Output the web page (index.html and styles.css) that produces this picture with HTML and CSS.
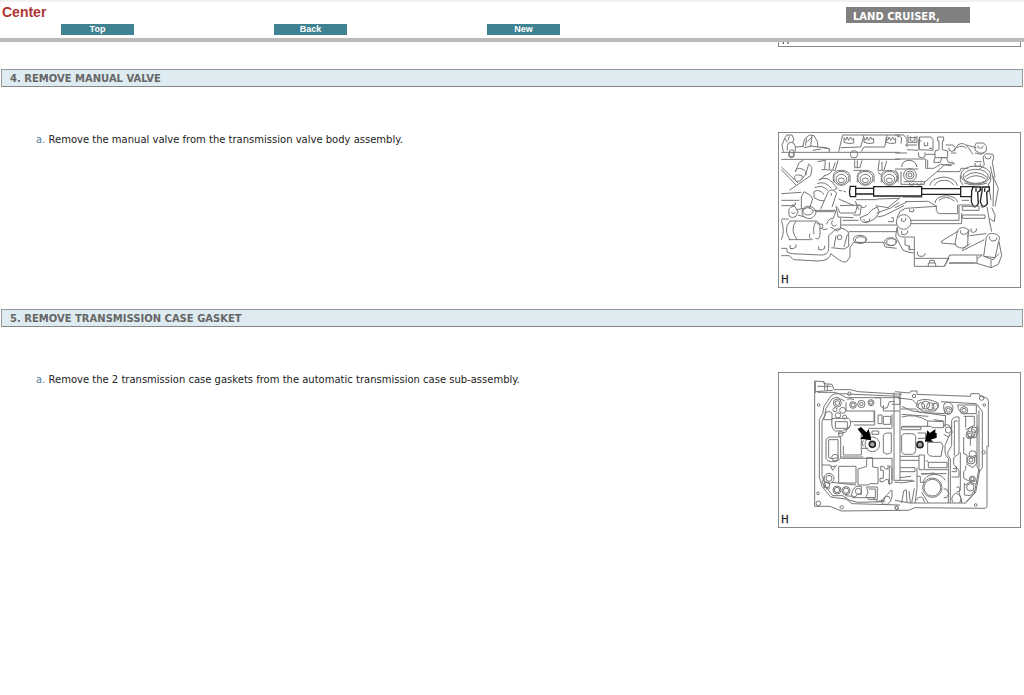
FILE: index.html
```html
<!DOCTYPE html>
<html lang="en">
<head>
<meta charset="utf-8">
<title>Center</title>
<link rel="stylesheet" href="styles.css">
</head>
<body>
<header class="topbar">
  <div class="brand">
    <h1 class="title">Center</h1>
    <nav class="nav"><a href="#top">Top</a><a href="#back">Back</a><a href="#new">New</a></nav>
  </div>
  <div class="model">LAND CRUISER,</div>
</header>
<main class="content">
  <div class="previous"><span>H</span></div>

  <section class="step">
    <h2 class="heading">4. REMOVE MANUAL VALVE</h2>
    <div class="row">
      <p class="text"><span class="letter">a.</span> Remove the manual valve from the transmission valve body assembly.</p>
      <figure class="figure">
        <svg viewBox="27 24 723 462" role="img" aria-label="Manual valve in the valve body">
          <g class="ink">
            <path d="M34 82H390M34 103H390M40 80L36 60 44 40 50 30H66L72 44 66 54M44 40l8 12M58 34l-4 12M52 76V62q2-10 12-10t12 12v16M58 82q0-8 7-8t7 8v12H58zM76 66l26-2M98 66L104 42 118 30 132 32 142 50 144 68M110 40l-4 22M126 32l-4 34M112 50l14-14M102 68q24-8 44-2l34 6-4 10M128 76l26-4M154 66l22 4M206 80L218 30H390M212 68l60-2 10-36M274 80l8-14h62l8-36M222 52V38l5 8 4-10 5 10 6-10 4 8 5-4v14q-14 4-29-2zM282 52V38l5 8 4-10 5 10 6-10 4 8 5-4v14q-14 4-29-2zM348 52V38l5 8 4-10 5 10 6-10 4 8 5-4v14q-14 4-29-2z"/>
            <circle cx="64" cy="90" r="8"/><circle cx="252" cy="88" r="11"/>
            <path d="M34 126L84 174M34 134L78 180M76 140L88 112 100 106M116 118L106 150 92 166M76 140q4-14 20-8t12 18M86 150q-14-2-12 10t14 8q12-4 8-16zM116 116L126 128 122 152 58 196M142 110L166 106 164 134H154M164 134l32 2 8-30M178 112v20M196 112l-8 22M160 154Q180 148 186 138M148 166L166 150M254 106v22h16l6-22M262 106v22M250 136h26M328 106l-4 30h18l8-28M336 110v24M324 140l8 10M190 172v-20q2-16 24-16t26 16v20M262 172v-20q2-16 24-16t26 16v20M334 172v-20q2-16 24-16t26 16v20"/>
            <ellipse cx="214" cy="160" rx="23" ry="21"/><ellipse cx="214" cy="163" rx="16" ry="15"/><ellipse cx="214" cy="166" rx="9" ry="7"/>
            <ellipse cx="286" cy="160" rx="23" ry="21"/><ellipse cx="286" cy="163" rx="16" ry="15"/><ellipse cx="286" cy="166" rx="9" ry="7"/>
            <ellipse cx="358" cy="160" rx="23" ry="21"/><ellipse cx="358" cy="163" rx="16" ry="15"/><ellipse cx="358" cy="166" rx="9" ry="7"/>
            <path d="M146 164Q174 152 190 176L202 190 190 196M142 176Q164 166 184 190M134 188Q156 178 174 196M132 200Q146 190 162 208M172 206q4-14 18-10l10 8-14 42M172 206l-20 46M132 200v18q14 10 32 10M184 204v8M34 206l60-4M34 226h54M34 242h40M94 252V216l8-16 18 10 8 12-10 30M66 240h10v-8M206 196l10 2M220 198l8 3M206 222l46 20M258 224h64M256 228l10 26M322 222l68-2M274 246q12 6 14-6M316 242l38 6 36-30"/>
          </g>
          <g class="ink" transform="translate(375 0)">
            <path d="M0 30H26L36 42V66M6 36q8-6 14 2l-2 18M38 30l2 22h26V32M46 34v12q6 6 14 0V34M40 38h24M30 60h36M36 74l34 2M74 36h34l6 8v32l-42-2zM74 36l-4 14 2 24M88 52v10h10V52M80 48h-6M102 70h10M70 82l2 14q10 6 18-2V82M92 88h28M128 36h18v12h-4v26l16 4v20H120V78l12-4V48h-4zM120 98l-4 14h20l4-14h14l6 14h16M152 60h20l8 6M162 68v8q8 6 18 0v-8M168 84h16M178 76l10-16Q206 48 220 68L234 88M186 68q16-10 28 2M214 60l30 8M240 62l4-8h22l8 10v14q-8 10-20 6l-14-8zM248 62q0 8 8 8t8-8M240 84l20 4 8-8M264 96l8-10 22 2 2 10-4 14 8 46M270 94q0 8 9 8t9-8M264 96l4 24-16 14M238 110h22M240 114v10h16v-8M294 154l16 36-10 54M286 124l10 44-2 76M280 176l8 50M0 84H36M0 102H92V130H116M0 132h70M98 104v24M20 126q2-20 22-20t24 20M180 116l-32 4-22 20-40 34M126 140h68l4-10h22M116 130l20-12 34 4"/>
            <circle cx="45" cy="150" r="19"/><circle cx="45" cy="150" r="12"/><circle cx="45" cy="150" r="6"/><path d="M0 136q8 4 10 16t-10 18"/>
            <ellipse cx="242" cy="150" rx="45" ry="27"/><ellipse cx="242" cy="154" rx="38" ry="21"/><path d="M208 156q34-28 70 2M214 162q30-20 58 0M208 174q34 12 68 0M196 152v16l8 12M287 152v16l-8 12M18 140v38H88V168M26 170H86M44 174v6h12v-6M66 174v6h12v-6M104 182q4-22 42-26 34 2 42 26M118 182q8-16 30-16 18 0 28 14M120 234q2-20 34-22 30 2 34 20M132 226q22-18 46 2M30 230l70-1 26 16M0 248l34-16M22 216l60 1M200 226h22M188 240h42"/>
          </g>
          <path class="shaft" d="M241 184h16v6h54v-5h144v6h117v-6h38v30h-38v-7H455v5H311v-6h-54v8h-16q-5-15 0-31zM257 190v18M311 186v24M455 188v25M572 190v20"/>
          <path class="shaft" d="M609 186h22v10l-8 6 2 34q-7 12-16 6l-5-12 1-32zM636 186h22v10l-8 6 2 34q-7 12-16 6l-5-12 5-32zM618 190v10M644 190v10"/>
          <g class="ink" transform="translate(0 240)">
            <path d="M34 42h22M34 46q12 32 0 58M60 48q-22 26 0 56M78 48q-20 28 4 56M60 48h80M56 104h66M138 50q14-2 12 28 2 30-14 22M138 50q-10 14-6 38M120 86q-6 14 8 18M140 56l18 2v12h-10M34 130h16l2 12 14 4 84 4q26 2 26-20V92l22-20h14M34 152h24l12 12 72 4q38 0 40-22l16 12Q222 176 230 170L240 156V128L250 112H340l6 14 34 4M60 120v10q10 4 18-4v-8M146 124v10q10 4 18-4v-8M56 16q2-12 18-12l10 16-6 14q-12 8-20 0zM64 22q4 8 12 0M96 18q4-16 22-14t20 20q-8 20-26 16t-16-22M78 14l28-4M130 16h66M84 30l20 6M138 20h56M210 2l60-2M204 10l6 14h46l6-22h12l-4 28h-20M158 74l14-2M170 58q4-18 20-18l12-34M188 46q-8 12 4 18l8-4M182 66l20 12 10-8v-32M218 46h48M212 68l18 8 6 8v40l-14 8-38-4M198 92l-6 34M232 88l-10 38M202 96q0-6 7-6t7 7-8 7-6-8M236 80h144M214 60H380M198 2l6 34 46 2M270 38l24-10 12-14 16-8 6 16-14 20-22 10q-18 4-22-14M282 42q-2 10 14 8l4-10M320 24l40-14 28-18M322 36l20-4 60-30M354 50h16V38h-6"/>
            <ellipse cx="270" cy="103" rx="20" ry="12"/><ellipse cx="272" cy="105" rx="16" ry="10"/><ellipse cx="362" cy="110" rx="18" ry="12"/><ellipse cx="364" cy="111" rx="14" ry="10"/><ellipse cx="114" cy="19" rx="15" ry="11"/>
          </g>
          <g class="ink" transform="translate(375 240)">
            <circle cx="26" cy="51" r="22"/><path d="M20 40v8q8 4 12-2v-8M6 38L16 18 32 10 124 4M44 12v8h12v-8M124 2v14q2 10 12 10h52V0M192 2v44H48M200 24v32H48M202 4h50v12H202zM202 30h68v10H202zM6 66l4 24 10 6h38v88h90l14-24H60M20 78v10q10 4 18-4v-8M6 68l-4 26L24 136l18 6 16 2M30 100v20l14 4v10h14M42 122v14M68 140q-4 14 10 14t12-10M100 184v-10h22v10M104 174v-8h14v8M190 78l-50 30v6l44 4M180 114l8-38q12-16 32-2l-2 46q-14 16-34 4zM196 76q-2 12 10 12t12-8M228 70v10q8 6 16-2v-8M222 74l-4 22M224 92l50-6M200 138l68-34M202 132l24-16M274 98q4-16 24-12t14 20l-12 52-34-4zM284 94q-2 14 10 14t12-10M312 110l8 42-10 26-22 10-46-14H162M148 184l16-34h98M162 174h80M246 152v22M266 154l28 10 18-18M288 164v22M262 150l-16 12M276 6l6 34 16 10 2-20-10-22M282 42l8 38M234 2q0 8 9 4M258 2q0 8 9 4"/>
          </g>
          <text class="mark" x="34" y="474">H</text>
        </svg>
      </figure>
    </div>
  </section>

  <section class="step">
    <h2 class="heading">5. REMOVE TRANSMISSION CASE GASKET</h2>
    <div class="row">
      <p class="text"><span class="letter">a.</span> Remove the 2 transmission case gaskets from the automatic transmission case sub-assembly.</p>
      <figure class="figure">
        <svg viewBox="27 22 723 462" role="img" aria-label="Two transmission case gaskets">
          <g class="ink">
            <path d="M134 422V46l28 2v6l24 2 6 16h50l22 6 132 8M136 48v34M142 62h42M164 50v24M172 56v18M136 78l52-4M142 80h50l16 4 182 8M148 240V162l10-18 4-22 20-30q8-10 24-8l22 12H390M156 240V166l8-16 4-22 18-28q8-6 18-4l20 10M168 140q-4 16-8 22h26V142q-8-8-18-2M228 110v26h84v32H240M232 102q6-6 20 0M316 98q6-6 16 0v24q8 10 20 4l6-18h16M340 118v18h48M390 96V116H366M314 134v44H252M324 148h12v26h-12zM340 152h22v24h-22zM366 146v40M196 168h36v20h-36zM186 158h50q10 8 2 28l-20 10h-22q-14-6-10-38M240 180l-14 20-20 4M306 196h20v10h-20zM340 240V208q4-6 12-6h12v38M274 206v44M296 188h70M300 200v20M168 240V222q4-8 12-8h32v26M176 240V222h28v18M274 248h20M372 80V240M390 80V240M280 224q-6 8 0 18M384 98h12"/>
            <circle cx="202" cy="112" r="12"/><circle cx="202" cy="112" r="7"/><circle cx="218" cy="134" r="9"/><circle cx="195" cy="132" r="6"/><circle cx="204" cy="149" r="8"/><circle cx="224" cy="154" r="6"/><circle cx="249" cy="118" r="10"/><circle cx="249" cy="118" r="6"/><circle cx="274" cy="115" r="11"/><circle cx="274" cy="115" r="5"/><circle cx="303" cy="111" r="9"/><circle cx="303" cy="111" r="5"/><circle cx="238" cy="84" r="5"/><circle cx="146" cy="118" r="4"/><circle cx="212" cy="205" r="7"/><circle cx="307" cy="236" r="22"/>
          </g>
          <g class="ink" transform="translate(375 0)">
            <path d="M0 78l44 4 4-6h18v10l160 6 2-8h24l4 8 16 4q8 2 8 10v138M20 98l32 4 16 16M68 106q28-12 62 6v12l-10 12H82l-18-14zM20 122l32 14 98 14M18 130h44l12 10 76 4M20 146l80 6M20 154q42-12 78 12v16H20M98 166l48 2v18h-36M116 162l30 4M20 184h58v8H20zM94 182h16M20 240V210q2-6 12-6h18q10 0 12 8v28M68 202h24v16H68M98 230h40l6 10M98 230v10M146 120q0-10 12-10t16 14q0 20-14 22t-14-26M188 118h56v26h-36q-18-2-20-26M138 108l106 6 18 24v102M152 148l-2 36M144 184q8-12 20-4l8 20-12 14-14-8M164 206l-14 34M170 240V164q4-10 12-10h10v86M178 240V166h10M206 152h32v28l-16 6-6 18 10 12h16l8-22-4-14M212 152v34M246 146v94M252 134v106M226 218v22M206 240v-26M212 192l14-6 16 10-4 16-22 4"/>
            <circle cx="79" cy="121" r="10"/><circle cx="92" cy="118" r="12"/><circle cx="106" cy="122" r="11"/><circle cx="120" cy="122" r="9"/><circle cx="57" cy="91" r="5"/><circle cx="160" cy="134" r="11"/><circle cx="160" cy="134" r="6"/><circle cx="207" cy="134" r="11"/><circle cx="207" cy="134" r="6"/><circle cx="160" cy="193" r="9"/><circle cx="224" cy="208" r="11"/><circle cx="224" cy="208" r="6"/><circle cx="237" cy="192" r="8"/><circle cx="260" cy="97" r="7"/><circle cx="268" cy="118" r="4"/>
          </g>
          <g class="ink" transform="translate(0 240)">
            <path d="M134 182h46l34 14 176-2M148 0v94l8 28 26 32 46 6 18 14 144 4M156 0v90l12 34 20 26h30q20 18 46 20l82-2M168 0v38q4 10 16 10h14l14-10V0M176 0v36q8 6 28 0V0M220 0v28h54v-18M206 62h52v50h-52zM264 70q14-4 26-8V36h18v28l16 2v48h-24l-6 4h-30zM156 58h24l8 16 12-16M182 62h14M214 38h154M214 34h66M340 0v20q12 10 24 0V0M372 0v104h18M366 40v64M354 58v12h-8l-6-8h-8v12h8v24h-10v10h10l6-6h10v14M358 60l8 8v44l-8 4zM290 124h32v38h-26l-8-10 6-10zM296 130h20v26h-20M258 122h16v24h-12l-6 8-12-4 4-16zM164 94l-8 16 16 22M186 110l72 8M160 124l20 4M246 156h62l14 8M318 168l24-4 4-12q14-12 16-18h4v20q-4 18-14 22h-12q-8-4-4-16M340 162q0-8 10-10t10 8M374 110h16M226 150l20 2"/>
            <circle cx="177" cy="98" r="15"/><circle cx="177" cy="98" r="9"/><circle cx="170" cy="118" r="9"/><circle cx="201" cy="133" r="12"/><circle cx="201" cy="133" r="8"/><circle cx="228" cy="135" r="12"/><circle cx="228" cy="135" r="8"/><circle cx="265" cy="137" r="9"/><circle cx="144" cy="143" r="4"/><circle cx="145" cy="173" r="7"/><circle cx="215" cy="185" r="5"/><circle cx="380" cy="186" r="5"/><circle cx="195" cy="36" r="10"/>
          </g>
          <g class="ink" transform="translate(375 240)">
            <path d="M0 194h40l20-8 210 2q6-2 6-8V0M0 164l44 8h170M15 0v104h39M20 0v18q4 10 12 8h20q10-2 10-12V0M98 0v24q4 8 14 8h26l6-32M15 32h57M15 44h57M72 28h16v44H72zM92 44l8 4M100 50h56v16h-56zM90 72h68M78 84h76M66 66v62M15 66h45v12H15M15 112l45-6M15 96l33-4M80 86l38-4M66 92h10v18h14M58 128l-8 44M66 128l-6 44M20 172l6-36 8-4 2 40M42 136l4 34M64 164q4-12 14-10t10 16M80 140l20 32M118 86q26 2 32 18M84 110q6-22 34-24M150 0v20q2 12 10 18v134M170 0l-12 20q0 10 8 20v132M192 0v24l-16 12v20l16 18v20h-22M178 0v30M184 62v16h-14M174 68h12M196 20v104l-4 16 6 20-4 12M146 130h8l8 14-8 12h-8M174 170q-10-14 8-28 18 4 18 30M184 124q10-2 12 6t-10 8M206 0v24l10 4v28l18 10 10-12V30h-8M246 0v62l8 14-12 64-28 30M252 0v66l-6 34-8 42-26 28M262 0v66l-10 14M212 60v12l-6 6v20l16 8h20M210 118l14-8 18 6M208 112v36l18 2 12-16"/>
            <circle cx="112" cy="126" r="29"/><circle cx="112" cy="126" r="25"/><circle cx="233" cy="26" r="11"/><circle cx="228" cy="43" r="12"/><circle cx="228" cy="43" r="6"/><circle cx="232" cy="100" r="9"/><circle cx="232" cy="100" r="5"/><circle cx="226" cy="125" r="11"/><circle cx="266" cy="20" r="5"/><circle cx="242" cy="178" r="4"/><circle cx="5" cy="186" r="5"/>
          </g>
          <g class="gasket"><circle cx="307" cy="236" r="9"/><circle cx="450" cy="237" r="9"/></g>
          <path class="arrow" d="M263 190l10-6 16 16 7-10 8 34-34-5 9-8zM465 228l7-34 8 8 16-12v12h4v14l-18 6 9 6z"/>
          <text class="mark" x="34" y="472">H</text>
        </svg>
      </figure>
    </div>
  </section>
</main>
</body>
</html>
```
FILE: styles.css
```css
* { box-sizing: border-box; }
body {
  margin: 0;
  background: #fff;
  color: #222;
  font-family: Verdana, "DejaVu Sans", sans-serif;
  font-size: 10px;
  line-height: 16px;
}
h1, h2, p, figure { margin: 0; }

.topbar {
  display: flex;
  justify-content: space-between;
  align-items: flex-start;
  height: 42px;
  padding-right: 54px;
  border-top: 2px solid #f1f1f1;
  border-bottom: 4px solid #bbb;
}
.title {
  padding: 2px 2px 0;
  color: #b03434;
  font: bold 14px/16px "Liberation Sans", Arial, sans-serif;
}
.nav {
  display: flex;
  gap: 140px;
  margin: 4px 0 0 61px;
}
.nav a {
  width: 73px;
  height: 11px;
  background: #3f8292;
  color: #fff;
  font: bold 9px/11px "Liberation Sans", Arial, sans-serif;
  text-align: center;
  text-decoration: none;
}
.model {
  width: 124px;
  height: 16px;
  margin-top: 5px;
  padding: 2px 7px 0;
  background: #808080;
  color: #fff;
  font-weight: bold;
  line-height: 15px;
}

.content { padding: 0 1px; }
.previous {
  display: flex;
  align-items: flex-end;
  width: 243px;
  height: 5px;
  margin: 0 2px 22px auto;
  padding-left: 3px;
  overflow: hidden;
  border: 1px solid #888;
  border-top: 0;
  font: 10px/10px "Liberation Sans", Arial, sans-serif;
}

.step { margin-bottom: 21px; }
.heading {
  height: 18px;
  padding-left: 8px;
  border: 1px solid #999;
  border-bottom-color: #888;
  background: #deebf0;
  color: #666;
  font-size: 10px;
  line-height: 17px;
}
.row {
  display: flex;
  justify-content: space-between;
  align-items: flex-start;
  margin-top: 45px;
  padding: 0 2px 0 35px;
}
.letter { color: #557f99; }
.figure {
  flex: none;
  width: 243px;
  height: 156px;
  border: 1px solid #888;
}
.figure svg {
  display: block;
  width: 100%;
  height: 100%;
}
.ink {
  fill: none;
  stroke: #777;
  stroke-width: 3;
}
.shaft {
  fill: #fff;
  stroke: #222;
  stroke-width: 4;
}
.gasket {
  fill: #aaa;
  stroke: #222;
  stroke-width: 5;
}
.arrow { fill: #000; }
.mark {
  fill: #222;
  stroke: #222;
  stroke-width: 1;
  font: 30px "Liberation Sans", Arial, sans-serif;
}
```
